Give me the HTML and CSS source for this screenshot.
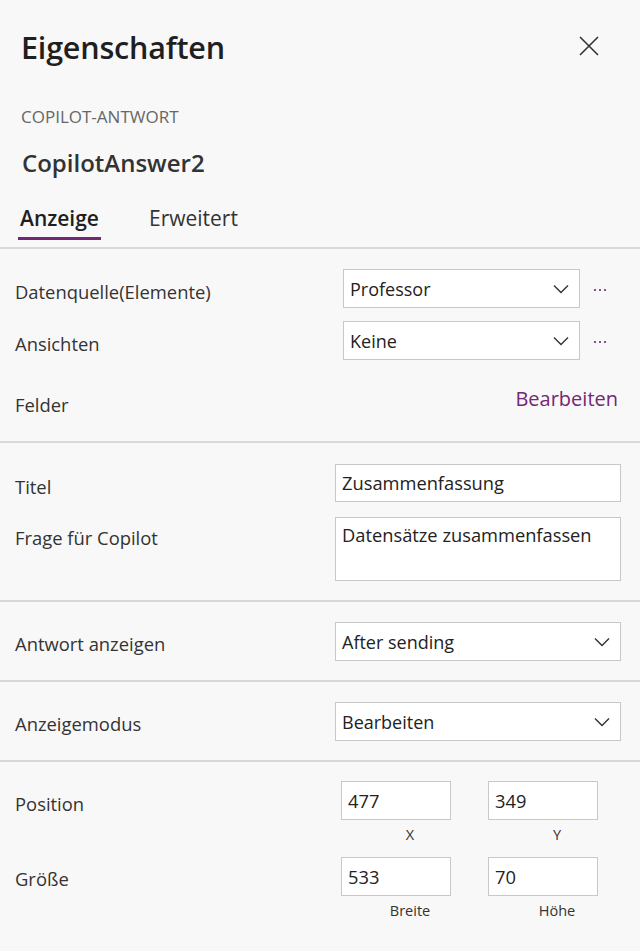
FILE: index.html
```html
<!DOCTYPE html>
<html lang="de">
<head>
<meta charset="utf-8">
<link rel="stylesheet" href="styles.css">
</head>
<body>
<div class="panel">
  <header class="head">
    <h1 class="title">Eigenschaften</h1>
    <button class="close" aria-label="Schließen">
      <svg width="20" height="20" viewBox="0 0 20 20"><path d="M1 1 L19 19 M19 1 L1 19" stroke="#333" stroke-width="1.6" fill="none"/></svg>
    </button>
  </header>
  <div class="kind">COPILOT-ANTWORT</div>
  <div class="name">CopilotAnswer2</div>
  <nav class="tabs">
    <span class="tab active">Anzeige</span>
    <span class="tab">Erweitert</span>
  </nav>

  <section class="sec sec1">
    <div class="row r-ds">
      <span class="label">Datenquelle(Elemente)</span>
      <div class="dd narrow"><span>Professor</span><svg class="chev" width="16" height="10" viewBox="0 0 16 10"><path d="M1 1.5 L8 8.5 L15 1.5" stroke="#333" stroke-width="1.4" fill="none"/></svg></div>
      <svg class="more" width="14" height="4" viewBox="0 0 14 4"><circle cx="2" cy="2" r="1.1" fill="#742774"/><circle cx="7" cy="2" r="1.1" fill="#742774"/><circle cx="12" cy="2" r="1.1" fill="#742774"/></svg>
    </div>
    <div class="row r-ds">
      <span class="label">Ansichten</span>
      <div class="dd narrow"><span>Keine</span><svg class="chev" width="16" height="10" viewBox="0 0 16 10"><path d="M1 1.5 L8 8.5 L15 1.5" stroke="#333" stroke-width="1.4" fill="none"/></svg></div>
      <svg class="more" width="14" height="4" viewBox="0 0 14 4"><circle cx="2" cy="2" r="1.1" fill="#742774"/><circle cx="7" cy="2" r="1.1" fill="#742774"/><circle cx="12" cy="2" r="1.1" fill="#742774"/></svg>
    </div>
    <div class="row r-felder">
      <span class="label">Felder</span>
      <span class="link">Bearbeiten</span>
    </div>
  </section>

  <section class="sec sec2">
    <div class="row r-wide">
      <span class="label">Titel</span>
      <div class="box">Zusammenfassung</div>
    </div>
    <div class="row r-wide r-top">
      <span class="label">Frage für Copilot</span>
      <div class="box area">Datensätze zusammenfassen</div>
    </div>
  </section>

  <section class="sec sec3">
    <div class="row r-wide">
      <span class="label">Antwort anzeigen</span>
      <div class="dd wide"><span>After sending</span><svg class="chev" width="16" height="10" viewBox="0 0 16 10"><path d="M1 1.5 L8 8.5 L15 1.5" stroke="#333" stroke-width="1.4" fill="none"/></svg></div>
    </div>
  </section>

  <section class="sec sec3">
    <div class="row r-wide">
      <span class="label">Anzeigemodus</span>
      <div class="dd wide"><span>Bearbeiten</span><svg class="chev" width="16" height="10" viewBox="0 0 16 10"><path d="M1 1.5 L8 8.5 L15 1.5" stroke="#333" stroke-width="1.4" fill="none"/></svg></div>
    </div>
  </section>

  <section class="sec sec5">
    <div class="row r-pair">
      <span class="label">Position</span>
      <div class="pair">
        <div class="num"><div class="box small">477</div><span class="cap">X</span></div>
        <div class="num"><div class="box small">349</div><span class="cap">Y</span></div>
      </div>
    </div>
    <div class="row r-pair">
      <span class="label">Größe</span>
      <div class="pair">
        <div class="num"><div class="box small">533</div><span class="cap">Breite</span></div>
        <div class="num"><div class="box small">70</div><span class="cap">Höhe</span></div>
      </div>
    </div>
  </section>
</div>
</body>
</html>
```

FILE: styles.css
```css
* { box-sizing: border-box; }
html, body { margin: 0; padding: 0; }
body {
  background: #f8f8f8;
  font-family: "Open Sans", "Noto Sans", sans-serif;
  color: #333;
  width: 640px;
  height: 951px;
  overflow: hidden;
}
.panel { width: 640px; }

.head {
  display: flex;
  justify-content: space-between;
  align-items: flex-start;
  padding: 27px 41px 0 21px;
  height: 94px;
}
.title {
  margin: 0;
  font-size: 30.5px;
  font-weight: 600;
  color: #1f1f1f;
  line-height: 40px;
  letter-spacing: -0.2px;
}
.close {
  border: 0;
  background: none;
  padding: 0;
  margin-top: 9px;
  width: 20px;
  height: 20px;
}
.close svg { display: block; }

.kind {
  padding-left: 21px;
  font-size: 17px;
  color: #666;
  line-height: 22px;
  margin-top: 12px;
}
.name {
  padding-left: 22px;
  font-size: 24px;
  font-weight: 600;
  color: #333;
  line-height: 30px;
  margin-top: 20px;
}
.tabs {
  display: flex;
  gap: 48px;
  padding-left: 19px;
  margin-top: 25px;
  height: 46px;
  border-bottom: 2px solid #d8d8d8;
}
.tab {
  font-size: 21px;
  line-height: 30px;
  color: #333;
  height: 37px;
}
.tab.active {
  font-weight: 600;
  color: #1f1f1f;
  border-bottom: 3px solid #742774;
  padding: 0 2px;
  margin-left: -1px;
}

.sec {
  border-bottom: 2px solid #d8d8d8;
}
.row {
  display: flex;
  align-items: center;
}
.label {
  flex: 1;
  padding-left: 15px;
  font-size: 18.4px;
  color: #333;
}

.sec1 { padding: 20px 0 0; height: 194px; }
.r-ds { height: 39px; margin-bottom: 13px; padding-right: 33px; }
.r-ds .label { margin-top: 5px; }
.dd {
  display: flex;
  align-items: center;
  justify-content: space-between;
  height: 39px;
  background: #fff;
  border: 1px solid #c8c8c8;
  font-size: 18px;
  color: #222;
  padding: 0 10px 0 6px;
}
.dd.narrow { width: 237px; }
.dd.wide { width: 286px; }
.chev { display: block; }
.more {
  display: block;
  margin-left: 13px;
  margin-top: 2px;
}
.r-felder { padding-right: 22px; margin-top: 20px; height: 36px; }
.r-felder .label { margin-top: 12px; }
.link {
  color: #742774;
  font-size: 20px;
}

.r-wide { padding-right: 19px; }
.box {
  background: #fff;
  border: 1px solid #c8c8c8;
  font-size: 18.3px;
  color: #222;
}
.sec2 { padding-top: 21px; height: 159px; }
.sec2 .box { width: 286px; height: 38px; padding: 4px 6px; line-height: 28px; }
.sec2 .r-wide { margin-bottom: 15px; }
.sec2 .r-wide .label { margin-top: 6px; }
.r-top { align-items: flex-start; }
.r-top .label { padding-top: 2px; }
.sec2 .box.area { height: 64px; padding-top: 3px; }

.sec3 { padding-top: 20px; height: 80px; }
.sec3 .label { margin-top: 4px; }

.sec5 { border-bottom: 0; padding-top: 19px; }
.r-pair { padding-right: 42px; align-items: flex-start; }
.r-pair .label { margin-top: 10px; }
.pair { display: flex; gap: 37px; }
.num { display: flex; flex-direction: column; align-items: center; width: 110px; }
.box.small { width: 110px; height: 39px; padding: 0 6px; line-height: 37px; align-self: stretch; }
.cap {
  font-size: 14.5px;
  color: #333;
  line-height: 20px;
  margin-top: 5px;
  margin-left: 28px;
  height: 32px;
}
.r-pair + .r-pair .label { margin-top: 9px; }
```
